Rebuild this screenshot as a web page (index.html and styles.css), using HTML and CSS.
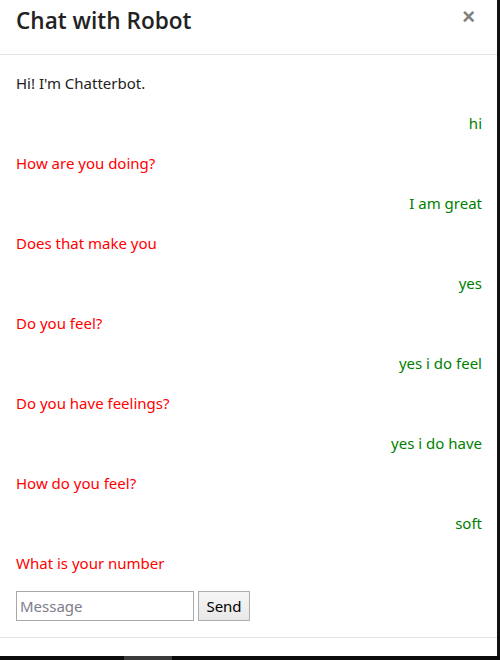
FILE: index.html
```html
<!DOCTYPE html>
<html>
<head>
<meta charset="utf-8">
<link rel="stylesheet" href="styles.css">
</head>
<body>
<div class="frame">
  <div class="modal">
    <div class="modal-header">
      <h4 class="title">Chat with Robot</h4>
      <span class="close">×</span>
    </div>
    <div class="modal-body">
      <div class="msgs">
        <p class="msg bot first">Hi! I'm Chatterbot.</p>
        <p class="msg me">hi</p>
        <p class="msg bot">How are you doing?</p>
        <p class="msg me">I am great</p>
        <p class="msg bot">Does that make you</p>
        <p class="msg me">yes</p>
        <p class="msg bot">Do you feel?</p>
        <p class="msg me">yes i do feel</p>
        <p class="msg bot">Do you have feelings?</p>
        <p class="msg me">yes i do have</p>
        <p class="msg bot">How do you feel?</p>
        <p class="msg me">soft</p>
        <p class="msg bot">What is your number</p>
      </div>
      <form class="send-row">
        <input class="input" type="text" placeholder="Message">
        <button class="btn" type="button">Send</button>
      </form>
    </div>
    <div class="modal-footer"></div>
  </div>
  <div class="edge"></div>
</div>
<div class="taskbar">
  <div class="tb-gap"></div>
  <div class="tb-item"></div>
</div>
</body>
</html>
```

FILE: styles.css
```css
html, body {
  margin: 0;
  padding: 0;
  background: #0c0c0c;
}
body {
  width: 500px;
  height: 660px;
  overflow: hidden;
  font-family: "Noto Sans", "Open Sans", sans-serif;
}
.frame {
  display: flex;
  height: 656px;
}
.modal {
  width: 497px;
  background: #fff;
  display: flex;
  flex-direction: column;
}
.edge {
  width: 3px;
  background: #111;
}
.modal-header {
  height: 54px;
  border-bottom: 1px solid #e5e5e5;
  display: flex;
  align-items: flex-start;
  justify-content: space-between;
  padding: 0 22px 0 16px;
}
.title {
  margin: 6px 0 0;
  font-family: "Open Sans", sans-serif;
  font-weight: 600;
  font-size: 22.6px;
  line-height: 30px;
  color: #222;
}
.close {
  font-family: "Liberation Sans", sans-serif;
  font-size: 22px;
  font-weight: bold;
  line-height: 20px;
  margin-top: 7px;
  color: #000;
  opacity: 0.5;
}
.modal-body {
  padding: 16px 15px 16px 16px;
  border-bottom: 1px solid #e5e5e5;
}
.msgs {
  display: flex;
  flex-direction: column;
  padding-top: 2px;
}
.msg {
  margin: 0 0 20px;
  font-size: 15px;
  line-height: 20px;
}
.msg:last-child { margin-bottom: 18px; }
.bot { color: #ff0000; }
.bot.first { color: #222; }
.me { color: #008000; text-align: right; }
.send-row {
  display: flex;
  gap: 4px;
  margin: 0;
}
.input {
  width: 178px;
  height: 30px;
  box-sizing: border-box;
  border: 1px solid #a9a9a9;
  padding: 0 3px;
  font-family: "Noto Sans", sans-serif;
  font-size: 15px;
  outline: none;
}
.input::placeholder { color: #7d7d8c; }
.btn {
  width: 52px;
  height: 30px;
  box-sizing: border-box;
  border: 1px solid #adadad;
  background: linear-gradient(#f6f6f6, #e8e8e8);
  font-family: "Noto Sans", sans-serif;
  font-size: 15px;
  color: #000;
  padding: 0;
}
.modal-footer {
  flex: 1;
}
.taskbar {
  height: 4px;
  display: flex;
}
.tb-gap { width: 124px; }
.tb-item { width: 48px; background: #3a3a3a; }
```
